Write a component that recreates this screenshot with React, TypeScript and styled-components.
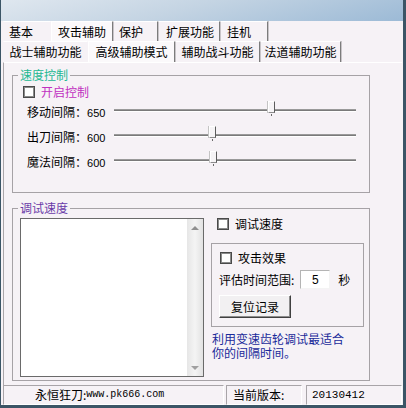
import React from 'react';
import styled, { createGlobalStyle } from 'styled-components';

const GlobalStyle = createGlobalStyle`
  body {
    margin: 0;
    font-family: "Noto Sans CJK SC", "Liberation Sans", sans-serif;
    font-size: 12px;
    color: #000;
  }
`;

const Window = styled.div`
  width: 406px;
  height: 408px;
  box-sizing: border-box;
  border-left: 1px solid #3b5566;
  border-right: 3px solid #3b5566;
  border-bottom: 3px solid #3b5566;
  background: #f6f2f6;
  display: flex;
  flex-direction: column;
`;

const TitleBar = styled.div`
  height: 21px;
  flex: 0 0 21px;
  background: linear-gradient(165deg, #dfe7ef 0%, #c4d4e3 45%, #9cbad6 100%);
`;

const TabRow = styled.div<{ $h: number }>`
  display: flex;
  height: ${(p) => p.$h}px;
  flex: 0 0 ${(p) => p.$h}px;
  padding-left: 2px;
  align-items: stretch;
`;

const Tab = styled.div<{ $w: number; $pl?: number; $active?: boolean; $sep?: boolean }>`
  width: ${(p) => p.$w}px;
  box-sizing: border-box;
  padding-left: ${(p) => (p.$pl ? `${p.$pl}px` : 0)};
  display: flex;
  align-items: center;
  justify-content: ${(p) => (p.$pl ? 'flex-start' : 'center')};
  line-height: 16px;
  white-space: nowrap;
  border-top: 1px solid #fff;
  border-left: 1px solid ${(p) => (p.$active ? '#fff' : 'transparent')};
  border-right: ${(p) => (p.$sep === false ? '1px solid transparent' : '1px solid #7c7c7c')};
  box-shadow: ${(p) => (p.$sep === false ? 'none' : '1px 0 0 #c8c4c8')};
  background: ${(p) => (p.$active ? '#fbf9fb' : 'transparent')};
`;

const Panel = styled.div`
  flex: 0 0 323px;
  margin-left: 2px;
  margin-right: 1px;
  box-sizing: border-box;
  border-top: 1px solid #fff;
  border-left: 1px solid #aaa6aa;
  display: flex;
  flex-direction: column;
`;

const Group = styled.fieldset<{ $mt: number; $pb: number }>`
  margin: ${(p) => p.$mt}px 0 0 8px;
  padding: 0 0 ${(p) => p.$pb}px 0;
  width: 358px;
  min-width: 0;
  box-sizing: border-box;
  border: 1px solid #a6a2a6;
`;

const Legend = styled.legend<{ $color: string }>`
  margin-left: 5px;
  padding: 0 2px;
  line-height: 16px;
  color: ${(p) => p.$color};
`;

const CheckRow = styled.label<{ $ml: number; $mt?: number; $color?: string }>`
  display: flex;
  align-items: center;
  height: 16px;
  margin: ${(p) => p.$mt ?? 0}px 0 0 ${(p) => p.$ml}px;
  color: ${(p) => p.$color ?? '#000'};
  line-height: 16px;
`;

const Box = styled.span`
  width: 12px;
  height: 12px;
  box-sizing: border-box;
  border: 1px solid #4a4a4a;
  box-shadow: inset 0 0 0 1px #8a8a8a;
  background: #fff;
  margin-right: 6px;
`;

const SliderRow = styled.div`
  display: flex;
  align-items: center;
  height: 25px;
  padding-left: 14px;
`;

const SliderLabel = styled.div`
  flex: 0 0 87px;
  line-height: 16px;
  white-space: nowrap;
`;

const Num = styled.span`
  font-family: "Liberation Sans", sans-serif;
  font-size: 11px;
`;

const Track = styled.div`
  position: relative;
  width: 242px;
  height: 25px;
  display: flex;
  align-items: center;
`;

const Groove = styled.div`
  width: 100%;
  height: 3px;
  margin-top: -5px;
  box-sizing: border-box;
  background: #7a7a7a;
  border-top: 1px solid #9a9a9a;
  border-bottom: 1px solid #fff;
`;

const Thumb = styled.div`
  position: absolute;
  top: 1px;
  width: 7px;
  height: 12px;
  margin-left: -3px;
  box-sizing: border-box;
  background: #f6f4f6;
  border-top: 1px solid #fff;
  border-left: 1px solid #fff;
  border-right: 1px solid #5c5c5c;
  border-bottom: 1px solid #8c8c8c;
  box-shadow: -1px 0 0 #c4c4c4;
  &::after {
    content: '';
    position: absolute;
    left: 2px;
    top: 12px;
    width: 1px;
    height: 2px;
    background: #6a6a6a;
  }
`;

const DebugBody = styled.div`
  display: flex;
  padding-left: 7px;
`;

const ListBox = styled.div`
  width: 184px;
  height: 159px;
  margin-top: 2px;
  box-sizing: border-box;
  border: 1px solid #6a6a6a;
  background: #fff;
  display: flex;
`;

const ListContent = styled.div`
  flex: 1;
`;

const ScrollBar = styled.div`
  flex: 0 0 16px;
  background: linear-gradient(90deg, #e6e6e6, #f4f4f4 50%, #e2e2e2);
  display: flex;
  flex-direction: column;
  justify-content: space-between;
  align-items: center;
  padding: 7px 0 6px;
  box-sizing: border-box;
`;

const Arrow = styled.div<{ $down?: boolean }>`
  width: 0;
  height: 0;
  border-left: 4px solid transparent;
  border-right: 4px solid transparent;
  ${(p) => (p.$down ? 'border-top: 4px solid #a0a0a0;' : 'border-bottom: 4px solid #909090;')}
`;

const RightCol = styled.div`
  margin-left: 7px;
  width: 153px;
  display: flex;
  flex-direction: column;
`;

const InnerFrame = styled.div`
  margin-top: 11px;
  height: 84px;
  box-sizing: border-box;
  border: 1px solid #a6a2a6;
  padding: 6px 0 0 7px;
  display: flex;
  flex-direction: column;
`;

const TimeRow = styled.div`
  display: flex;
  align-items: center;
  height: 19px;
  margin-top: 4px;
  line-height: 16px;
  white-space: nowrap;
`;

const SmallInput = styled.div`
  width: 30px;
  height: 19px;
  margin-left: 6px;
  margin-right: 8px;
  box-sizing: border-box;
  background: #fff;
  border: 1px solid;
  border-color: #b4b4b4 #f4f4f4 #f4f4f4 #b4b4b4;
  display: flex;
  align-items: center;
  justify-content: center;
  font-family: "Liberation Sans", sans-serif;
  font-size: 12px;
`;

const Button = styled.div`
  width: 72px;
  height: 23px;
  margin-top: 6px;
  box-sizing: border-box;
  background: #f2f0f2;
  border: 1px solid;
  border-color: #fff #404040 #404040 #fff;
  box-shadow: inset -1px -1px 0 #8c8c8c;
  display: flex;
  align-items: center;
  justify-content: center;
  line-height: 16px;
`;

const Hint = styled.div`
  margin: 5px 0 0 1px;
  line-height: 14px;
  color: #1a2a9a;
`;

const StatusBar = styled.div`
  flex: 0 0 20px;
  display: flex;
  align-items: stretch;
  padding-left: 2px;
`;

const Pane = styled.div<{ $w: number; $ml: number; $pl: number }>`
  width: ${(p) => p.$w}px;
  margin-left: ${(p) => p.$ml}px;
  padding-left: ${(p) => p.$pl}px;
  box-sizing: border-box;
  border: 1px solid;
  border-color: #a8a4a8 #fff #fff #a8a4a8;
  display: flex;
  align-items: center;
  line-height: 16px;
  white-space: nowrap;
`;

const Mono = styled.span<{ $size?: number }>`
  font-family: "Liberation Mono", monospace;
  font-size: ${(p) => p.$size ?? 10}px;
`;

const sliders = [
  { label: '移动间隔：', value: 650, pos: 64.8 },
  { label: '出刀间隔：', value: 600, pos: 40.6 },
  { label: '魔法间隔：', value: 600, pos: 41 },
];

export default function App() {
  return (
    <>
      <GlobalStyle />
      <Window>
        <TitleBar />
        <TabRow $h={20}>
          <Tab $w={48} $pl={5} $sep={false}>基本</Tab>
          <Tab $w={62} $pl={6} $active>攻击辅助</Tab>
          <Tab $w={45} $pl={5}>保护</Tab>
          <Tab $w={62} $pl={7}>扩展功能</Tab>
          <Tab $w={48} $pl={6}>挂机</Tab>
        </TabRow>
        <TabRow $h={21}>
          <Tab $w={85} $sep={false}>战士辅助功能</Tab>
          <Tab $w={87} $active>高级辅助模式</Tab>
          <Tab $w={85}>辅助战斗功能</Tab>
          <Tab $w={81}>法道辅助功能</Tab>
        </TabRow>
        <Panel>
          <Group $mt={4} $pb={17}>
            <Legend $color="#22b892">速度控制</Legend>
            <CheckRow $ml={10} $mt={1} $color="#c030c0">
              <Box />
              开启控制
            </CheckRow>
            {sliders.map((s) => (
              <SliderRow key={s.label}>
                <SliderLabel>
                  {s.label}
                  <Num>{s.value}</Num>
                </SliderLabel>
                <Track>
                  <Groove />
                  <Thumb style={{ left: `${s.pos}%` }} />
                </Track>
              </SliderRow>
            ))}
          </Group>
          <Group $mt={7} $pb={3}>
            <Legend $color="#6a3aa8">调试速度</Legend>
            <DebugBody>
              <ListBox>
                <ListContent />
                <ScrollBar>
                  <Arrow />
                  <Arrow $down />
                </ScrollBar>
              </ListBox>
              <RightCol>
                <CheckRow $ml={6}>
                  <Box />
                  调试速度
                </CheckRow>
                <InnerFrame>
                  <CheckRow $ml={1}>
                    <Box />
                    攻击效果
                  </CheckRow>
                  <TimeRow>
                    评估时间范围:
                    <SmallInput>5</SmallInput>
                    秒
                  </TimeRow>
                  <Button>复位记录</Button>
                </InnerFrame>
                <Hint>
                  利用变速齿轮调试最适合
                  <br />
                  你的间隔时间。
                </Hint>
              </RightCol>
            </DebugBody>
          </Group>
        </Panel>
        <StatusBar>
          <Pane $w={221} $ml={0} $pl={31}>
            永恒狂刀:<Mono>www.pk666.com</Mono>
          </Pane>
          <Pane $w={76} $ml={2} $pl={6}>当前版本:</Pane>
          <Pane $w={96} $ml={4} $pl={5}>
            <Mono $size={11}>20130412</Mono>
          </Pane>
        </StatusBar>
      </Window>
    </>
  );
}
